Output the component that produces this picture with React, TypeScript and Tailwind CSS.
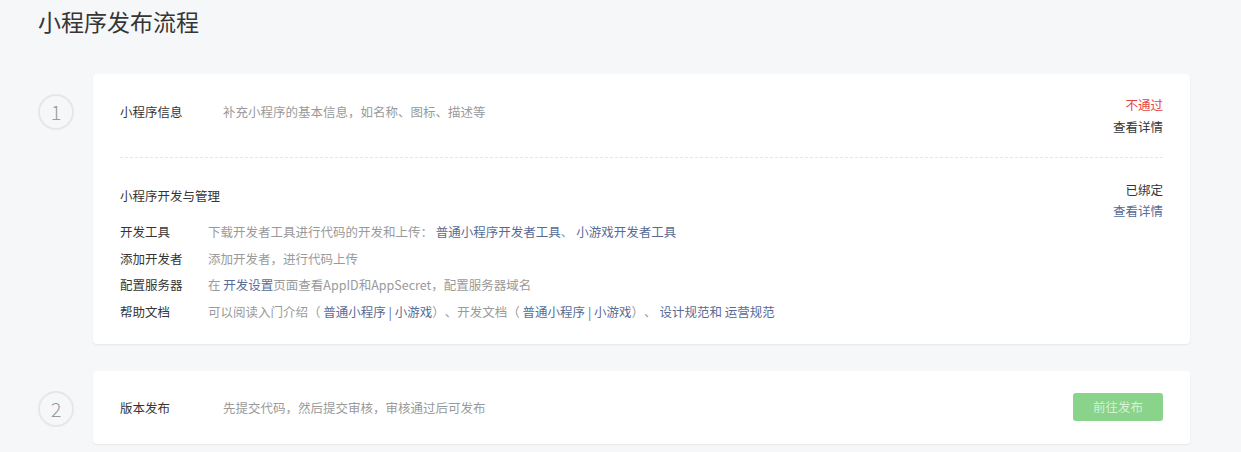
import React from 'react';

const font = { fontFamily: '"Noto Sans CJK SC", "Noto Sans", sans-serif' };

const Link: React.FC<{ children: React.ReactNode }> = ({ children }) => (
  <a className="text-[#576b95] cursor-pointer">{children}</a>
);

const StepCircle: React.FC<{ n: number }> = ({ n }) => (
  <div className="mt-[20px] w-[36px] h-[36px] shrink-0 rounded-full border-2 border-[#e7e7e7] flex items-center justify-center text-[20px] font-light text-[#9a9a9a]">
    {n}
  </div>
);

const devRows: { label: string; content: React.ReactNode }[] = [
  {
    label: '开发工具',
    content: (
      <>
        下载开发者工具进行代码的开发和上传： <Link>普通小程序开发者工具</Link>、 <Link>小游戏开发者工具</Link>
      </>
    ),
  },
  { label: '添加开发者', content: '添加开发者，进行代码上传' },
  {
    label: '配置服务器',
    content: (
      <>
        在 <Link>开发设置</Link>页面查看AppID和AppSecret，配置服务器域名
      </>
    ),
  },
  {
    label: '帮助文档',
    content: (
      <>
        可以阅读入门介绍（ <Link>普通小程序 | 小游戏</Link>）、开发文档（ <Link>普通小程序 | 小游戏</Link>）、 <Link>设计规范和</Link> <Link>运营规范</Link>
      </>
    ),
  },
];

const App: React.FC = () => {
  return (
    <div
      className="min-h-screen bg-[#f6f7f9] pl-[38px] pr-[51px] text-[12.5px] text-[#353535] [text-spacing-trim:space-all]"
      style={font}
    >
      <h1 className="pt-[6px] text-[23px] leading-[30px] font-normal text-[#353535]">小程序发布流程</h1>

      {/* 步骤一 */}
      <div className="flex gap-[19px] mt-[38px]">
        <StepCircle n={1} />
        <section className="flex-1 bg-white rounded-[4px] shadow-[0_1px_2px_rgba(0,0,0,0.07)] px-[27px]">
          <div className="flex justify-between items-start pt-[20px] pb-[19px] leading-[22px] border-b border-dashed border-[#e6e6e6]">
            <div className="flex mt-[7px]">
              <span className="w-[103px]">小程序信息</span>
              <span className="text-[#9a9a9a]">补充小程序的基本信息，如名称、图标、描述等</span>
            </div>
            <div className="text-right">
              <p className="text-[#e64340]">不通过</p>
              <p className="cursor-pointer">查看详情</p>
            </div>
          </div>

          <div className="flex justify-between items-start pt-[21px] pb-[18px]">
            <div className="flex-1">
              <p className="mt-[6px] leading-[21px]">小程序开发与管理</p>
              <div className="mt-[13px]">
                {devRows.map((r) => (
                  <div key={r.label} className="flex leading-[26.7px]">
                    <span className="w-[88px] shrink-0">{r.label}</span>
                    <span className="text-[#9a9a9a]">{r.content}</span>
                  </div>
                ))}
              </div>
            </div>
            <div className="text-right leading-[21px]">
              <p>已绑定</p>
              <p className="text-[#576b95] cursor-pointer">查看详情</p>
            </div>
          </div>
        </section>
      </div>

      {/* 步骤二 */}
      <div className="flex gap-[19px] mt-[27px]">
        <StepCircle n={2} />
        <section className="flex-1 h-[73px] bg-white rounded-[4px] shadow-[0_1px_2px_rgba(0,0,0,0.07)] px-[27px] flex items-center justify-between">
          <div className="flex mt-[2px]">
            <span className="w-[103px]">版本发布</span>
            <span className="text-[#9a9a9a]">先提交代码，然后提交审核，审核通过后可发布</span>
          </div>
          <button className="w-[90px] h-[28px] rounded-[3px] bg-[#8ad38a] text-[#d8f1d7] text-[12.5px] cursor-not-allowed">
            前往发布
          </button>
        </section>
      </div>
    </div>
  );
};

export default App;
